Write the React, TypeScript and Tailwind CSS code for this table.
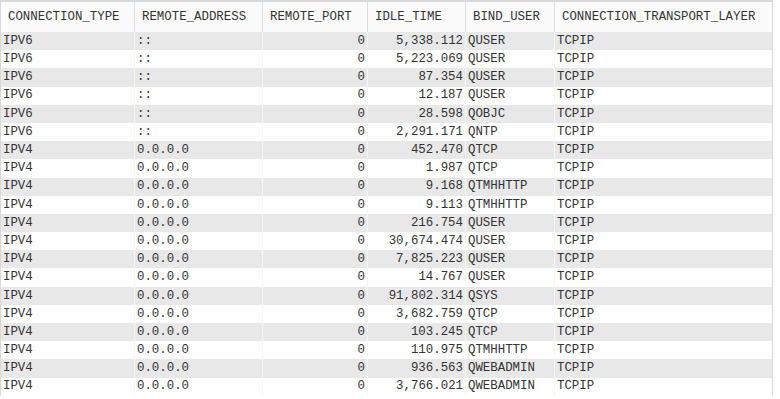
import React from 'react';

type Row = [string, string, string, string, string, string];

const rows: Row[] = [
  ['IPV6', '::', '0', '5,338.112', 'QUSER', 'TCPIP'],
  ['IPV6', '::', '0', '5,223.069', 'QUSER', 'TCPIP'],
  ['IPV6', '::', '0', '87.354', 'QUSER', 'TCPIP'],
  ['IPV6', '::', '0', '12.187', 'QUSER', 'TCPIP'],
  ['IPV6', '::', '0', '28.598', 'QOBJC', 'TCPIP'],
  ['IPV6', '::', '0', '2,291.171', 'QNTP', 'TCPIP'],
  ['IPV4', '0.0.0.0', '0', '452.470', 'QTCP', 'TCPIP'],
  ['IPV4', '0.0.0.0', '0', '1.987', 'QTCP', 'TCPIP'],
  ['IPV4', '0.0.0.0', '0', '9.168', 'QTMHHTTP', 'TCPIP'],
  ['IPV4', '0.0.0.0', '0', '9.113', 'QTMHHTTP', 'TCPIP'],
  ['IPV4', '0.0.0.0', '0', '216.754', 'QUSER', 'TCPIP'],
  ['IPV4', '0.0.0.0', '0', '30,674.474', 'QUSER', 'TCPIP'],
  ['IPV4', '0.0.0.0', '0', '7,825.223', 'QUSER', 'TCPIP'],
  ['IPV4', '0.0.0.0', '0', '14.767', 'QUSER', 'TCPIP'],
  ['IPV4', '0.0.0.0', '0', '91,802.314', 'QSYS', 'TCPIP'],
  ['IPV4', '0.0.0.0', '0', '3,682.759', 'QTCP', 'TCPIP'],
  ['IPV4', '0.0.0.0', '0', '103.245', 'QTCP', 'TCPIP'],
  ['IPV4', '0.0.0.0', '0', '110.975', 'QTMHHTTP', 'TCPIP'],
  ['IPV4', '0.0.0.0', '0', '936.563', 'QWEBADMIN', 'TCPIP'],
  ['IPV4', '0.0.0.0', '0', '3,766.021', 'QWEBADMIN', 'TCPIP'],
];

const headers = [
  'CONNECTION_TYPE',
  'REMOTE_ADDRESS',
  'REMOTE_PORT',
  'IDLE_TIME',
  'BIND_USER',
  'CONNECTION_TRANSPORT_LAYER',
];

// numeric columns are right aligned
const rightAligned = [false, false, true, true, false, false];

const cols = 'grid grid-cols-[134px_128px_105px_98px_89px_218px]';

export default function App() {
  return (
    <div className="w-[780px] h-[399px] overflow-hidden bg-white text-[#333] font-['Liberation_Mono',monospace] text-[12.4px] leading-none">
      <div className="w-[773px] border-t-2 border-l border-r border-[#d9d9d9]">
        {/* Header */}
        <div className={`${cols} h-[30px] bg-[#fbfbfb]`}>
          {headers.map((h) => (
            <div key={h} className="flex items-center pl-[7px] border-r border-[#dcdcdc] last:border-r-0">
              {h}
            </div>
          ))}
        </div>

        {/* Body */}
        {rows.map((r, i) => (
          <div
            key={i}
            className={`${cols} h-[18.2px] ${i % 2 === 0 ? 'bg-[#e8e8e8]' : 'bg-white'}`}
          >
            {r.map((c, j) => (
              <div
                key={j}
                className={`flex items-center px-[2px] border-r border-[#f6f6f6] last:border-r-0 ${
                  rightAligned[j] ? 'justify-end' : ''
                }`}
              >
                {c}
              </div>
            ))}
          </div>
        ))}
      </div>
    </div>
  );
}
